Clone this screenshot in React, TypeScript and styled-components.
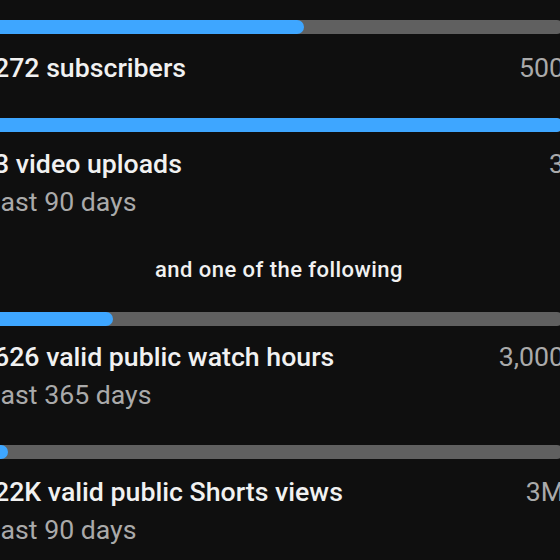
import React from 'react';
import styled, { createGlobalStyle } from 'styled-components';

const GlobalStyle = createGlobalStyle`
  html, body {
    margin: 0;
    padding: 0;
    background: #0f0f0f;
    overflow: hidden;
  }
  body {
    font-family: Roboto, "Noto Sans", Arial, sans-serif;
  }
`;

const Page = styled.div`
  width: 570px;
  height: 560px;
  margin-left: -6px;
  padding-top: 20px;
  display: flex;
  flex-direction: column;
  gap: 31px;
  box-sizing: border-box;
`;

const Section = styled.section`
  display: flex;
  flex-direction: column;
`;

const Track = styled.div`
  height: 14px;
  border-radius: 7px;
  background: #606060;
  overflow: hidden;
`;

const Fill = styled.div`
  height: 100%;
  border-radius: 7px;
  background: #3ea6ff;
`;

const Info = styled.div<{ $top: number }>`
  display: flex;
  flex-direction: column;
  padding-top: ${p => p.$top}px;
`;

const TitleRow = styled.div`
  display: flex;
  justify-content: space-between;
  align-items: baseline;
  line-height: 38px;
  font-size: 26.7px;
`;

const Title = styled.span`
  color: #f1f1f1;
  font-weight: 500;
  white-space: nowrap;
`;

const Goal = styled.span`
  color: #aaaaaa;
  font-weight: 400;
  white-space: nowrap;
`;

const Period = styled.div`
  color: #aaaaaa;
  font-size: 26.7px;
  line-height: 38px;
  white-space: nowrap;
`;

const Divider = styled.div`
  text-align: center;
  color: #f1f1f1;
  font-size: 22px;
  font-weight: 500;
  letter-spacing: 0.45px;
  line-height: 24px;
  padding-top: 6px;
  margin-bottom: -1px;
`;

interface Requirement {
  title: string;
  goal: string;
  period?: string;
  progress: number;
  top: number;
}

const before: Requirement[] = [
  { title: '272 subscribers', goal: '500', progress: 272 / 500, top: 15 },
  { title: '3 video uploads', goal: '3', period: 'last 90 days', progress: 1, top: 13 },
];

const after: Requirement[] = [
  { title: '626 valid public watch hours', goal: '3,000', period: 'last 365 days', progress: 626 / 3000, top: 12 },
  { title: '22K valid public Shorts views', goal: '3M', period: 'last 90 days', progress: 22000 / 3000000, top: 14 },
];

const RequirementBlock: React.FC<{ req: Requirement }> = ({ req }) => (
  <Section>
    <Track>
      <Fill style={{ width: `max(14px, ${Math.min(req.progress, 1) * 100}%)` }} />
    </Track>
    <Info $top={req.top}>
      <TitleRow>
        <Title>{req.title}</Title>
        <Goal>{req.goal}</Goal>
      </TitleRow>
      {req.period && <Period>{req.period}</Period>}
    </Info>
  </Section>
);

const App: React.FC = () => {
  return (
    <>
      <GlobalStyle />
      <Page>
        {before.map(r => (
          <RequirementBlock key={r.title} req={r} />
        ))}
        <Divider>and one of the following</Divider>
        {after.map(r => (
          <RequirementBlock key={r.title} req={r} />
        ))}
      </Page>
    </>
  );
};

export default App;
